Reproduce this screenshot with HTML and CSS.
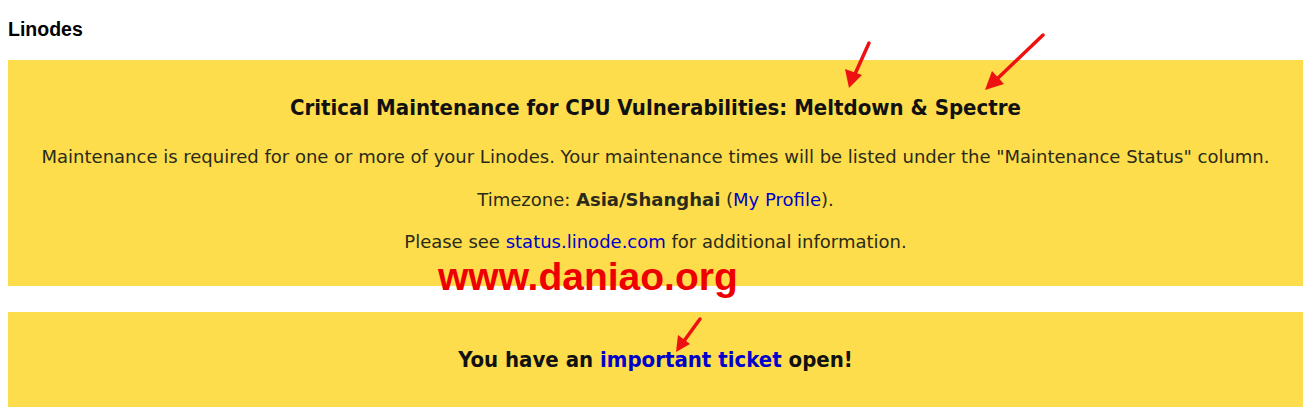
FILE: index.html
```html
<!DOCTYPE html>
<html>
<head>
<meta charset="utf-8">
<link rel="stylesheet" href="styles.css">
</head>
<body>
<h2 class="page-title">Linodes</h2>
<div class="notice notice-main">
  <h3 class="notice-title">Critical Maintenance for CPU Vulnerabilities: Meltdown &amp; Spectre</h3>
  <p class="notice-line">Maintenance is required for one or more of your Linodes. Your maintenance times will be listed under the "Maintenance Status" column.</p>
  <p class="notice-line">Timezone: <b>Asia/Shanghai</b> (<a href="#">My Profile</a>).</p>
  <p class="notice-line">Please see <a href="#">status.linode.com</a> for additional information.</p>
</div>
<div class="notice notice-ticket">
  <p class="ticket-line">You have an <a href="#">important ticket</a> open!</p>
</div>
<div class="watermark">www.daniao.org</div>
<svg class="arrows" width="1315" height="415" viewBox="0 0 1315 415">
  <g stroke="#ee1111" stroke-width="3.5" stroke-linecap="round" fill="#ee1111">
    <line x1="869" y1="43" x2="855" y2="74"/>
    <polygon points="849,88 845,69 862,75" stroke="none"/>
    <line x1="1043" y1="35" x2="996" y2="80"/>
    <polygon points="985,90 992,71 1004,84" stroke="none"/>
    <line x1="700" y1="319" x2="684" y2="341"/>
    <polygon points="676,352 678,335 690,344" stroke="none"/>
  </g>
</svg>
</body>
</html>
```
FILE: styles.css
```css
html, body {
  margin: 0;
  padding: 0;
  background: #ffffff;
}
body {
  padding: 8px;
  font-family: "DejaVu Sans Condensed", "DejaVu Sans", sans-serif;
  color: #222;
  position: relative;
}
.page-title {
  font-family: "Liberation Sans", Arial, sans-serif;
  font-size: 19.5px;
  font-weight: bold;
  color: #000;
  margin: 10px 0 20px 0;
  line-height: 22px;
}
.notice {
  background: #fddd4b;
  margin-right: 4px;
  text-align: center;
}
.notice-main {
  padding: 28px 0 28px 0;
  height: 170px;
}
.notice-title {
  font-size: 22px;
  font-weight: bold;
  color: #111;
  margin: 0 0 16px 0;
  line-height: 40px;
}
.notice-line {
  font-family: "DejaVu Sans", sans-serif;
  font-size: 18px;
  margin: 0 0 16.5px 0;
  line-height: 26px;
  color: #2a2a1a;
}
.notice-line a, .ticket-line a {
  color: #0000cc;
  text-decoration: none;
}
.notice-ticket {
  margin-top: 26px;
  height: 95px;
  display: flex;
  align-items: center;
  justify-content: center;
}
.ticket-line {
  margin: 0;
  font-size: 22px;
  font-weight: bold;
  color: #111;
}
.watermark {
  position: absolute;
  left: 438px;
  top: 255px;
  font-family: "Liberation Sans", Arial, sans-serif;
  font-weight: bold;
  font-size: 39px;
  color: #ee0000;
  line-height: 44px;
}
.arrows {
  position: absolute;
  left: 0;
  top: 0;
  pointer-events: none;
}
```
